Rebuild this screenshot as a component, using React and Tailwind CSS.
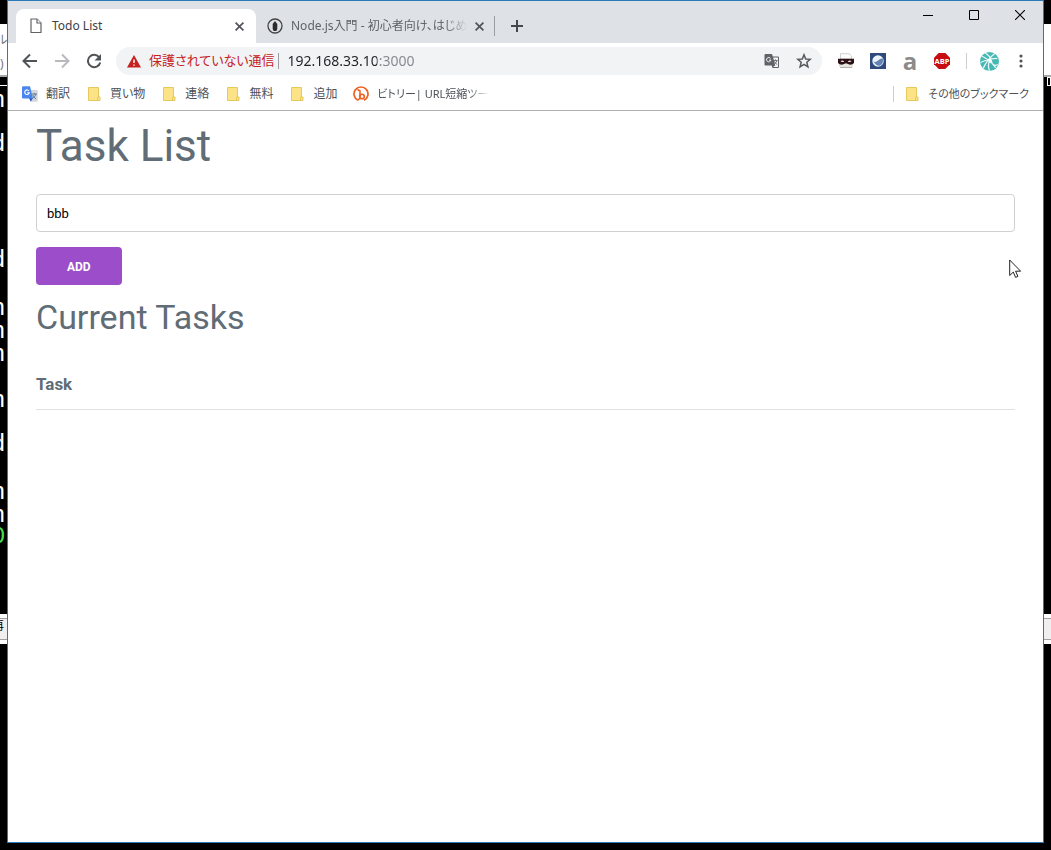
const jp = "font-['Noto_Sans','Noto_Sans_CJK_JP',sans-serif] [font-feature-settings:'palt']";

function Folder() {
  return (
    <svg width="16" height="16" viewBox="-1 0 16 16" className="shrink-0" aria-hidden="true">
      <path d="M1.500 1.500h10v9.500l1.500 0v3.500H1.500z" fill="#fde388" stroke="#e6c95c" />
      <path d="M10.500 14.500v-2.500q0-1.500 1.500-1.500" fill="none" stroke="#e6c95c" />
    </svg>
  );
}

function PageIcon() {
  return (
    <svg width="12" height="16" viewBox="0 0 12 16" fill="#fff" stroke="#5f6368" strokeWidth="1.2" aria-hidden="true">
      <path d="M1 1h6l4 4v9.500H1z" />
      <path d="M7 1v4h4" />
    </svg>
  );
}

function Pen() {
  return (
    <svg width="16" height="16" viewBox="0 0 16 16" aria-hidden="true">
      <circle cx="8" cy="8" r="7" fill="none" stroke="#444" strokeWidth="1.3" />
      <path d="M8 3 10.300 6v5l-1 2H6.700l-1-2V6z" fill="#2b2b2b" />
    </svg>
  );
}

function Close({ size }) {
  return (
    <svg width={size} height={size} viewBox="0 0 8 8" stroke="#50545a" strokeWidth="1.5" aria-hidden="true">
      <path d="M0.500 0.500l7 7M7.500 0.500l-7 7" />
    </svg>
  );
}

function GoogleTranslate() {
  return (
    <svg width="16" height="16" viewBox="0 0 16 16" className="shrink-0" aria-hidden="true">
      <path d="M6 4h8.500q1.200 0 1.200 1.200v9.300q0 1.200-1.200 1.200H9z" fill="#d3d7dd" />
      <path d="M10 8h5M12.500 7v1M14 8q-1 3-3.500 4.500M10.800 9q1.200 2.500 3.300 4" fill="none" stroke="#607d8b" strokeWidth="1" />
      <path d="M7 12h4l-2.300 3.700z" fill="#3058b8" />
      <path d="M1.200.3H8l3 12.200H1.200Q0 12.500 0 11.300V1.500Q0 .3 1.200.3z" fill="#4a86ee" />
      <path d="M7 5a2.300 2.300 0 1 0 .3 1.700H5.200" fill="none" stroke="#fff" strokeWidth="1.100" />
    </svg>
  );
}

function TranslateMono() {
  return (
    <svg width="16" height="16" viewBox="0 0 16 16" aria-hidden="true">
      <path d="M1.500 1H8l.8 2.500H14q1 0 1 1V14q0 1-1 1H8.500l-.8-2.500H1.500q-1 0-1-1V2q0-1 1-1z" fill="#5f6368" />
      <path d="M9.200 4.500H14v9.500H9l2.200-1.500z" fill="#f1f3f4" />
      <path d="M9.500 7.500h4M11.500 6.500v1M13 7.500q-.8 2.500-2.500 3.500M10.500 8.500q.8 2 2.700 3" fill="none" stroke="#5f6368" strokeWidth=".9" />
      <path d="M6.600 5.500a2.200 2.200 0 1 0 .3 1.600H5" fill="none" stroke="#f1f3f4" strokeWidth="1" />
    </svg>
  );
}

function Warning() {
  return (
    <svg width="14" height="13" viewBox="0 0 14 13" className="shrink-0" aria-hidden="true">
      <path d="M7 0 14 12.500H0z" fill="#c5221f" />
      <path d="M7 4.500v3.500M7 9.500v1.300" stroke="#fff" strokeWidth="1.400" />
    </svg>
  );
}

function Bitly() {
  return (
    <svg width="16" height="16" viewBox="0 0 16 16" className="shrink-0" fill="none" stroke="#ee6123" aria-hidden="true">
      <path d="M5 14.300A7 7 0 1 1 11 14.300" strokeWidth="1.700" />
      <path d="M4.500 3.500 7 5v6.500" strokeWidth="1.600" />
      <circle cx="9" cy="10.500" r="2.300" strokeWidth="1.600" />
      <path d="M5 14.300 7 12" strokeWidth="1.500" />
    </svg>
  );
}

function MaskPrinter() {
  return (
    <svg width="16" height="16" viewBox="0 0 16 16" aria-hidden="true">
      <path d="M2.500 6V.7h8.500l2.500 2.300v3z" fill="#fff" stroke="#c4c4c4" strokeWidth=".8" />
      <path d="M1 10h14v4H1z" fill="#e6e6df" />
      <path d="M2 14.500h12" stroke="#b0b0a6" />
      <path d="M0 5.700h16V10q-1 1.700-4 1.700L8 10.300l-4 1.400Q1 11.700 0 10z" fill="#2c1216" />
      <path d="M2.500 8.200q2-1.500 3.700.3-2 1.200-3.700-.3zM9.800 8.500q2-1.800 3.700-.3-1.800 1.500-3.700.3z" fill="#f2e6e6" />
    </svg>
  );
}

function BlueSquare() {
  return (
    <svg width="16" height="16" viewBox="0 0 16 16" aria-hidden="true">
      <path d="M0 0h16v16H0z" fill="#2e4a7d" />
      <circle cx="8" cy="8" r="5.700" fill="#eef3fa" />
      <path d="M3.300 8q2.200 2 4.700-.5t5-2Q13.500 11 10 12.500T3.300 8z" fill="#6483b3" />
    </svg>
  );
}

function Adblock() {
  return (
    <svg width="16" height="16" viewBox="0 0 17 17" aria-hidden="true">
      <path d="M5 0h7l5 5v7l-5 5H5l-5-5V5z" fill="#c70d12" />
      <text x="8.500" y="11.300" textAnchor="middle" fontSize="8" fontWeight="700" fontFamily="Open Sans" fill="#fff">ABP</text>
    </svg>
  );
}

function Avatar() {
  return (
    <svg width="19" height="19" viewBox="0 0 18 18" aria-hidden="true">
      <circle cx="9" cy="9" r="9" fill="#45b8b3" />
      <path d="M2 4q7 3 13 11M14 1.500Q7 7 3 15.500M.5 10q8-4 16-4M9 8q-2 5 0 10M5 1q5 3 6 8t6 3" fill="none" stroke="#e8f7f6" strokeWidth="1.200" />
      <circle cx="9.500" cy="8" r="1.500" fill="#fff" />
    </svg>
  );
}

function Backdrop() {
  const rows = [
    ["top-[91px]", "n"], ["top-[135px]", "d"], ["top-[251px]", "d"], ["top-[299px]", "n"], ["top-[322px]", "n"],
    ["top-[345px]", "n"], ["top-[391px]", "n"], ["top-[435px]", "d"], ["top-[483px]", "n"], ["top-[506px]", "n"],
  ];
  return (
    <div className={"absolute inset-0 overflow-hidden bg-black text-white " + jp} aria-hidden="true">
      <div className="absolute left-0 top-6 h-[53px] w-full border-b-2 border-[#aaa] bg-white text-xs text-[#777]">
        <span className="absolute -left-1 top-2">ル</span>
        <span className="absolute left-0 top-8">)</span>
      </div>
      <div className="absolute top-[85px] left-0 h-px w-[7px] bg-white" />
      <div className="absolute top-[77px] right-0 h-[9px] w-1 border border-white" />
      {rows.map(([top, ch]) => (
        <span key={top} className={"absolute -left-[9px] font-['Liberation_Mono',monospace] text-2xl leading-5 " + top}>{ch}</span>
      ))}
      <span className="absolute -left-[9px] top-[527px] font-['Liberation_Mono',monospace] text-2xl leading-5 text-[#4be04b]">0K</span>
      <div className="absolute left-0 top-[614px] h-[30px] w-full border-y-4 border-white bg-[#f0eeee] text-xs text-black">
        <div className="h-full border-y border-[#a0a0a0]" />
        <span className="absolute -left-2 top-0">再</span>
      </div>
    </div>
  );
}

function Bookmark({ icon, children, className = "" }) {
  return (
    <a href="#" className={"flex items-center gap-2 whitespace-nowrap " + className}>
      {icon}
      <span>{children}</span>
    </a>
  );
}

function Tabs() {
  return (
    <div className="flex h-[42px] bg-[#dee1e6] pl-2 text-xs text-[#3c4043]">
      <div className="mt-2 flex w-60 items-center rounded-t-lg bg-white pr-3 pl-[14px]">
        <PageIcon />
        <span className="ml-[10px] grow">Todo List</span>
        <button aria-label="Close Todo List"><Close size={9} /></button>
      </div>
      <div className="mt-2 flex w-[239px] items-center pl-[11px] text-[#5f6368]">
        <Pen />
        <span className="ml-2 w-44 overflow-hidden whitespace-nowrap [mask-image:linear-gradient(to_right,black_88%,transparent)]">Node.js入門 - 初心者向け、はじめての</span>
        <button className="ml-2" aria-label="Close Node.js"><Close size={9} /></button>
        <span className="ml-auto h-5 w-px bg-[#9a9da1]" />
      </div>
      <button className="mt-2 ml-4 self-center" aria-label="New tab">
        <svg width="12" height="12" viewBox="0 0 12 12" stroke="#44484d" strokeWidth="2"><path d="M6 0v12M0 6h12" /></svg>
      </button>
      <div className="ml-auto flex h-7 items-center gap-9 pr-[18px]">
        <button aria-label="Minimize"><svg width="10" height="10" viewBox="0 0 10 10" stroke="#000"><path d="M0 5.500h10" /></svg></button>
        <button aria-label="Maximize"><svg width="10" height="10" viewBox="0 0 10 10" fill="none" stroke="#000"><path d="M.5.500h9v9h-9z" /></svg></button>
        <button aria-label="Close"><svg width="10" height="10" viewBox="0 0 10 10" stroke="#000" strokeWidth="1.100"><path d="M0 0l10 10M10 0L0 10" /></svg></button>
      </div>
    </div>
  );
}

function Toolbar() {
  return (
    <div className="flex h-9 items-center pl-[14px] text-[#5f6368]">
      <div className="flex items-center gap-4">
        <button aria-label="Back"><svg width="16" height="16" viewBox="0 0 16 16" fill="none" stroke="#505458" strokeWidth="2"><path d="M15 8H2M8 1.500 1.500 8 8 14.500" /></svg></button>
        <button aria-label="Forward"><svg width="16" height="16" viewBox="0 0 16 16" fill="none" stroke="#b8babd" strokeWidth="2"><path d="M1 8h13M8 1.500 14.500 8 8 14.500" /></svg></button>
        <button aria-label="Reload"><svg width="16" height="16" viewBox="0 0 16 16"><path d="M13.300 4.500A6.200 6.200 0 1 0 14.200 9.500" fill="none" stroke="#505458" strokeWidth="2" /><path d="M15 1v6.500H8.500z" fill="#505458" /></svg></button>
      </div>
      <div className="ml-[14px] flex h-7 grow items-center rounded-full bg-[#f1f3f4] pr-[10px] pl-[11px]">
        <Warning />
        <span className="ml-2 text-[13px] whitespace-nowrap text-[#c5221f]">保護されていない通信</span>
        <span className="ml-1 h-4 w-px bg-[#9a9da1]" />
        <input
          aria-label="Address"
          defaultValue="192.168.33.10:3000"
          className="mx-2 h-5 min-w-0 grow bg-[linear-gradient(to_right,#202124_90px,#80868b_90px)] bg-clip-text text-sm text-transparent outline-none"
        />
        <button aria-label="Translate"><TranslateMono /></button>
        <button className="ml-4" aria-label="Bookmark this page">
          <svg width="16" height="16" viewBox="0 0 16 16" fill="none" stroke="#55595e" strokeWidth="1.500"><path d="M8 1.800 9.700 6l4.600.3-3.500 3 1.100 4.500L8 11.300l-3.900 2.500 1.100-4.500-3.500-3L6.300 6z" /></svg>
        </button>
      </div>
      <div className="flex items-center gap-4 pr-[14px] pl-4">
        <button aria-label="Print extension"><MaskPrinter /></button>
        <button aria-label="Blue extension"><BlueSquare /></button>
        <button className="h-6 w-4 font-['Open_Sans',sans-serif] text-2xl leading-4 font-bold text-[#8b8b8b]">a</button>
        <button aria-label="Adblock Plus"><Adblock /></button>
        <div className="flex items-center gap-[13px]">
          <span className="h-4 w-px bg-[#cbcdd0]" />
          <button aria-label="Profile"><Avatar /></button>
          <button className="ml-px w-4" aria-label="Menu">
            <svg width="16" height="16" viewBox="0 0 16 16" fill="#505458"><circle cx="8" cy="3" r="1.600" /><circle cx="8" cy="8" r="1.600" /><circle cx="8" cy="13" r="1.600" /></svg>
          </button>
        </div>
      </div>
    </div>
  );
}

function Bookmarks() {
  return (
    <nav className="flex h-8 items-center gap-4 border-b border-[#b0b0b2] pr-[14px] pb-px pl-[14px] text-xs text-[#4d5156]">
      <Bookmark icon={<GoogleTranslate />}>翻訳</Bookmark>
      <Bookmark icon={<Folder />}>買い物</Bookmark>
      <Bookmark icon={<Folder />}>連絡</Bookmark>
      <Bookmark icon={<Folder />}>無料</Bookmark>
      <Bookmark icon={<Folder />}>追加</Bookmark>
      <Bookmark icon={<Bitly />} className="w-34 overflow-hidden text-[11px] [mask-image:linear-gradient(to_right,black_85%,transparent)]">ビトリー| URL短縮ツール</Bookmark>
      <div className="ml-auto flex items-center gap-[10px] text-[11px]">
        <span className="h-4 w-px bg-[#cbcdd0]" />
        <Bookmark icon={<Folder />}>その他のブックマーク</Bookmark>
      </div>
    </nav>
  );
}

export default function App() {
  return (
    <div className="relative flex min-h-screen flex-col pr-[7px] pb-[7px] pl-[7px]">
      <Backdrop />
      <div className={"relative flex grow flex-col border border-[#2a7ab8] bg-white " + jp}>
        <header>
          <Tabs />
          <Toolbar />
          <Bookmarks />
        </header>
        <main className="px-7 pt-2 font-[Roboto,sans-serif] text-[#606c76]">
          <h1 className="text-[44px] leading-[55px]">Task List</h1>
          <form className="mt-5" onSubmit={(e) => e.preventDefault()}>
            <input aria-label="Task" defaultValue="bbb" className="block h-[38px] w-full rounded border border-[#d1d1d1] px-[10px] text-[13px] text-black outline-none" />
            <button className="mt-[15px] block h-[38px] rounded bg-[#9b4dca] px-[31px] pt-px text-xs font-bold text-white">ADD</button>
          </form>
          <h2 className="mt-[10px] text-[34px] leading-[45px]">Current Tasks</h2>
          <table className="mt-5 w-full text-left">
            <thead>
              <tr className="border-b border-[#e1e1e1]">
                <th className="h-[49px] text-[17px] font-bold">Task</th>
              </tr>
            </thead>
          </table>
        </main>
      </div>
      <svg className="absolute top-[259px] left-[1009px]" width="13" height="20" viewBox="0 0 13 20" aria-hidden="true">
        <path d="M.7 1v15.500l3.600-3.400 2.300 5.300 2.300-1-2.300-5.200h5z" fill="#fff" stroke="#222" strokeWidth="1" />
      </svg>
    </div>
  );
}
